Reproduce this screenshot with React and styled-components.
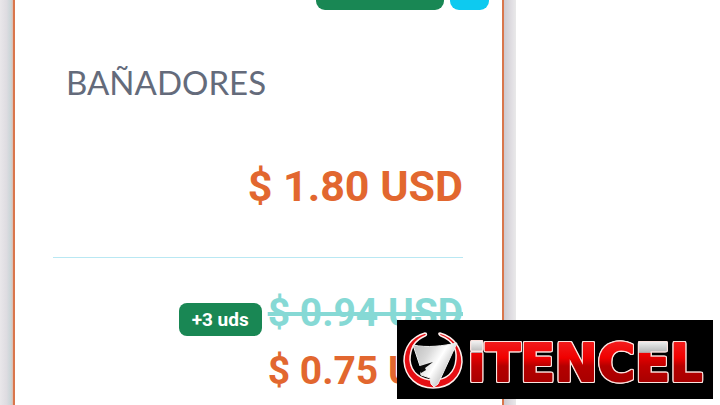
import React from "react";
import styled, { createGlobalStyle } from "styled-components";

const GlobalStyle = createGlobalStyle`
  * {
    box-sizing: border-box;
  }

  body {
    margin: 0;
    overflow: hidden;
    background: #fff;
    font-family: Roboto, sans-serif;
  }
`;

const Page = styled.div`
  display: grid;
  grid-template-columns: 43fr 17fr;
  height: 100vh;
  overflow: hidden;
`;

const Frame = styled.main`
  display: grid;
  grid-template-columns: 13px 1fr 12px;
`;

const Shade = styled.div`
  background: ${({ $side }) =>
    $side === "left"
      ? "linear-gradient(to right, #e9e7ea, #dedce1 50%, #c9d5d7 85%, #e3b9a8)"
      : "linear-gradient(to right, #cfcad0, #e2e0e4 70%, #e9e9e9)"};
`;

const Card = styled.article`
  padding: 0 39px 0 38px;
  background: #fff;
  border: solid #d9764c;
  border-width: 0 2px;
`;

const Tags = styled.div`
  display: flex;
  justify-content: flex-end;
  gap: 6px;
  height: 10px;
  margin-right: -26px;
`;

const Tag = styled.span`
  width: ${({ $wide }) => ($wide ? "128px" : "39px")};
  background: ${({ $wide }) => ($wide ? "#198754" : "#0dcaf0")};
  border-radius: 0 0 9px 9px;
`;

const Title = styled.h1`
  margin: 52px 0 0 13px;
  color: #646b7b;
  font: 400 33px/40px Lato, sans-serif;
`;

const Price = styled.p`
  margin: 0;
  color: #e2672f;
  font-size: ${({ $main }) => ($main ? "43px" : "39px")};
  font-weight: 700;
  line-height: 58px;
  text-align: right;
  white-space: nowrap;
`;

const Total = styled.div`
  padding: 55px 0 42px;
  border-bottom: 1px solid #b9e8f3;
`;

const Offer = styled.section`
  padding-top: 26px;
`;

const OfferRow = styled.div`
  display: flex;
  align-items: center;
  justify-content: flex-end;
  gap: 6px;
`;

const Units = styled.span`
  margin-top: 12px;
  padding: 0 13px;
  color: #fff;
  background: #198754;
  border-radius: 8px;
  font-size: 19px;
  font-weight: 700;
  line-height: 33px;
`;

const OldPrice = styled(Price)`
  color: #86d9d5;

  del {
    text-decoration-thickness: 4px;
  }
`;

const Brand = styled.aside`
  position: fixed;
  right: 7px;
  bottom: 6px;
  display: flex;
  background: #000;
`;

const Wordmark = styled.text`
  font-family: "DejaVu Sans", sans-serif;
  font-size: 51px;
  font-weight: 700;
  fill: url(#red);
  stroke: url(#red);
  stroke-width: 2px;
  stroke-linejoin: round;
  filter: drop-shadow(1px 0 0 #fbe3df) drop-shadow(-1px 0 0 #fbe3df)
    drop-shadow(0 1px 0 #fbe3df) drop-shadow(0 -1px 0 #fbe3df);
`;

const Capped = styled.tspan`
  fill: url(#capped);
  stroke: url(#capped);
`;

const BrandLogo = () => (
  <svg width="316" height="79" viewBox="0 0 316 79" role="img" aria-label="iTENCEL">
    <defs>
      <linearGradient id="red" gradientUnits="userSpaceOnUse" x1="0" y1="22" x2="0" y2="62">
        <stop offset="0" stopColor="#f21b1b" />
        <stop offset="0.4" stopColor="#f00000" />
        <stop offset="0.6" stopColor="#b50000" />
        <stop offset="1" stopColor="#a80000" />
      </linearGradient>
      <linearGradient id="capped" gradientUnits="userSpaceOnUse" x1="0" y1="22" x2="0" y2="62">
        <stop offset="0" stopColor="#eee" />
        <stop offset="0.26" stopColor="#b5b5b5" />
        <stop offset="0.28" stopColor="#f00000" />
        <stop offset="0.6" stopColor="#c00000" />
        <stop offset="1" stopColor="#a80000" />
      </linearGradient>
      <linearGradient id="steel" x1="0" y1="0" x2="1" y2="0.6">
        <stop offset="0" stopColor="#bababa" />
        <stop offset="0.35" stopColor="#d8d8d8" />
        <stop offset="0.6" stopColor="#fff" />
        <stop offset="1" stopColor="#aaa" />
      </linearGradient>
    </defs>
    <path
      d="M28 13C14 17 7 28 7 41C8 58 21 68 36 68C53 68 64 57 65 42C65 28 57 17 43 13C41 13 42 15 44 16C54 20 60 28 59 39C58 53 49 60 37 60C24 60 14 53 13 40C13 29 18 20 28 16C30 15 30 13 28 13Z"
      fill="#e50f14"
      stroke="#fff0ed"
      strokeWidth="1.5"
    />
    <path
      d="M16 25C30 28 46 26 60 23L41 64L37 67L34 64L33 58L24 55C23 52 25 49 35 43L23 46Z"
      fill="url(#steel)"
      stroke="#eee"
    />
    <path d="M23 46L36 42L28 48L29 50L24 53Z" fill="#0c0c0c" />
    <Wordmark x="71" y="61">
      <Capped>i</Capped>TENC<Capped>E</Capped>L
    </Wordmark>
  </svg>
);

const App = () => {
  return (
    <>
      <GlobalStyle />
      <Page>
        <Frame>
          <Shade $side="left" />
          <Card>
            <Tags>
              <Tag $wide />
              <Tag />
            </Tags>
            <Title>BAÑADORES</Title>
            <Total>
              <Price $main>$ 1.80 USD</Price>
            </Total>
            <Offer>
              <OfferRow>
                <Units>+3 uds</Units>
                <OldPrice>
                  <del>$ 0.94 USD</del>
                </OldPrice>
              </OfferRow>
              <Price>$ 0.75 USD</Price>
            </Offer>
          </Card>
          <Shade />
        </Frame>
      </Page>
      <Brand>
        <BrandLogo />
      </Brand>
    </>
  );
};

export default App;
